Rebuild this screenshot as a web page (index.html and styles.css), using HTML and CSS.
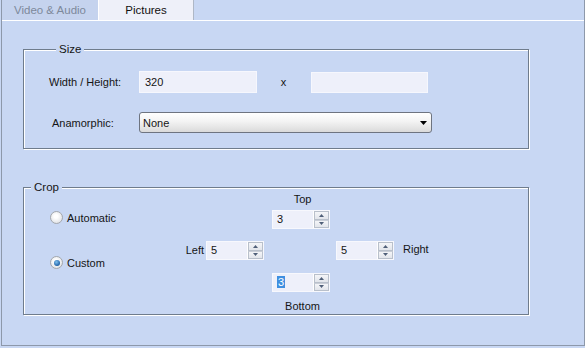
FILE: index.html
```html
<!DOCTYPE html>
<html>
<head>
<meta charset="utf-8">
<link rel="stylesheet" href="styles.css">
</head>
<body>
<div class="window">
  <div class="tabs">
    <div class="tab">Video &amp; Audio</div>
    <div class="tab active">Pictures</div>
  </div>
  <div class="panel">
    <fieldset class="group size">
      <legend>Size</legend>
      <div class="size-grid">
        <span class="lbl">Width / Height:</span>
        <div class="field">320</div>
        <span class="times">x</span>
        <div class="field"></div>
        <span class="lbl indent">Anamorphic:</span>
        <div class="combo">
          <span>None</span>
          <svg class="combo-arrow" width="7" height="4" viewBox="0 0 7 4"><path d="M0 0H7L3.5 4Z" fill="#000"/></svg>
        </div>
      </div>
    </fieldset>
    <fieldset class="group crop">
      <legend>Crop</legend>
      <div class="crop-body">
        <div class="radios">
          <div class="radio-row"><span class="radio"></span><span>Automatic</span></div>
          <div class="radio-row"><span class="radio checked"><span class="dot"></span></span><span>Custom</span></div>
        </div>
        <div class="cross">
          <span class="cap top-cap">Top</span>
          <div class="spin top-spin"><span class="spin-val">3</span><span class="spin-btns"><span class="up"><svg width="5" height="3" viewBox="0 0 5 3"><path d="M0 3L2.5 0L5 3Z" fill="#4f5f78"/></svg></span><span class="down"><svg width="5" height="3" viewBox="0 0 5 3"><path d="M0 0H5L2.5 3Z" fill="#4f5f78"/></svg></span></span></div>
          <span class="cap left-cap">Left</span>
          <div class="spin left-spin"><span class="spin-val">5</span><span class="spin-btns"><span class="up"><svg width="5" height="3" viewBox="0 0 5 3"><path d="M0 3L2.5 0L5 3Z" fill="#4f5f78"/></svg></span><span class="down"><svg width="5" height="3" viewBox="0 0 5 3"><path d="M0 0H5L2.5 3Z" fill="#4f5f78"/></svg></span></span></div>
          <div class="spin right-spin"><span class="spin-val">5</span><span class="spin-btns"><span class="up"><svg width="5" height="3" viewBox="0 0 5 3"><path d="M0 3L2.5 0L5 3Z" fill="#4f5f78"/></svg></span><span class="down"><svg width="5" height="3" viewBox="0 0 5 3"><path d="M0 0H5L2.5 3Z" fill="#4f5f78"/></svg></span></span></div>
          <span class="cap right-cap">Right</span>
          <div class="spin bottom-spin"><span class="spin-val"><span class="sel">3</span></span><span class="spin-btns"><span class="up"><svg width="5" height="3" viewBox="0 0 5 3"><path d="M0 3L2.5 0L5 3Z" fill="#4f5f78"/></svg></span><span class="down"><svg width="5" height="3" viewBox="0 0 5 3"><path d="M0 0H5L2.5 3Z" fill="#4f5f78"/></svg></span></span></div>
          <span class="cap bottom-cap">Bottom</span>
        </div>
      </div>
    </fieldset>
  </div>
</div>
</body>
</html>
```
FILE: styles.css
```css
* { box-sizing: border-box; }
html, body {
  margin: 0;
  padding: 0;
  background: #c8d7f3;
  font-family: "Liberation Sans", Arial, sans-serif;
  font-size: 11px;
  color: #151515;
}
.window {
  margin-left: 1px;
  width: 584px;
  height: 346px;
  border-left: 1px solid #8d98aa;
  border-right: 1px solid #8d98aa;
  border-bottom: 1px solid #8d98aa;
  display: flex;
  flex-direction: column;
}
.tabs {
  display: flex;
  height: 21px;
  border-bottom: 1px solid #ffffff;
}
.tab {
  width: 96px;
  height: 20px;
  line-height: 20px;
  text-align: center;
  color: #7d899b;
  background: #c5d3ee;
  font-size: 11.5px;
}
.tab.active {
  width: 96px;
  background: #eef0f9;
  color: #111;
  border-left: 1px solid #ffffff;
  border-right: 1px solid #aeb7c6;
}
.panel {
  flex: 1;
  padding: 0 0 0 21px;
}
.group {
  width: 506px;
  margin: 0;
  padding: 0;
  border: 1px solid #6f7c8c;
  box-shadow: inset 1px 1px 0 #ffffff, 1px 1px 0 #ffffff;
  min-width: 0;
}
.group legend {
  margin-left: 7px;
  padding: 0 3px;
  line-height: 13px;
  background: #c8d7f3;
  font-size: 11.5px;
}
.size {
  margin-top: 22px;
  padding: 14px 0 15px 25px;
}
.size-grid {
  display: grid;
  grid-template-columns: 90px 118px 54px 117px;
  grid-template-rows: 23px 21px;
  row-gap: 19px;
  align-items: center;
}
.lbl { white-space: nowrap; }
.indent { padding-left: 3px; }
.times { text-align: center; padding-right: 1px; }
.field {
  height: 22px;
  background: #eef0fa;
  border: 1px solid #f6f7fd;
  padding-left: 5px;
  line-height: 20px;
}
.size-grid .field:nth-of-type(2) { margin-top: 2px; height: 21px; }
.combo {
  grid-column: 2 / 5;
  width: 293px;
  height: 21px;
  border: 1px solid #6e7480;
  border-radius: 3px;
  background: linear-gradient(#ffffff, #f3f3f3 45%, #dadada);
  display: flex;
  align-items: center;
  justify-content: space-between;
  padding: 0 4px 0 3px;
}
.combo-arrow { margin-top: 1px; }
.crop {
  margin-top: 32px;
  padding: 0 0 1px 0;
}
.crop-body {
  display: flex;
}
.radios {
  width: 161px;
  padding: 17px 0 0 26px;
  display: flex;
  flex-direction: column;
  gap: 32px;
}
.radio-row {
  display: flex;
  align-items: center;
  gap: 4px;
  height: 13px;
}
.radio {
  width: 13px;
  height: 13px;
  border-radius: 50%;
  border: 1px solid #a3a7ad;
  background: radial-gradient(circle at 45% 40%, #ffffff 20%, #e4e6e9 70%, #cfd2d6);
  display: flex;
  align-items: center;
  justify-content: center;
}
.radio .dot {
  width: 6px;
  height: 6px;
  border-radius: 50%;
  background: radial-gradient(circle at 40% 35%, #7fc0ee, #1f62a8 70%, #12406f);
}
.cross {
  display: grid;
  grid-template-columns: 21px 58px 8px 58px 6px 58px auto;
  grid-template-rows: 16px 31px 32px 27px 13px;
  align-items: start;
}
.cap { line-height: 13px; white-space: nowrap; }
.top-cap { grid-column: 4; grid-row: 1; text-align: center; padding-left: 3px; margin-top: -1px; }
.top-spin { grid-column: 4; grid-row: 2; }
.left-cap { grid-column: 1; grid-row: 3; text-align: right; padding-right: 2px; margin-top: 3px; margin-left: -4px; }
.left-spin { grid-column: 2; grid-row: 3; }
.right-spin { grid-column: 6; grid-row: 3; }
.right-cap { grid-column: 7; grid-row: 3; padding-left: 9px; margin-top: 2px; }
.bottom-spin { grid-column: 4; grid-row: 4; }
.bottom-cap { grid-column: 4; grid-row: 5; text-align: center; padding-left: 3px; }
.spin {
  height: 19px;
  background: #eef0fa;
  border: 1px solid #f7f8fd;
  display: flex;
  justify-content: space-between;
}
.spin-val {
  padding-left: 4px;
  line-height: 17px;
}
.sel {
  background: #3f8fe0;
  color: #ffffff;
  padding: 0 1px;
}
.spin-btns {
  width: 16px;
  display: flex;
  flex-direction: column;
  border-left: 1px solid #ffffff;
}
.spin-btns span {
  flex: 1;
  display: flex;
  align-items: center;
  justify-content: center;
  border: 1px solid #b9c0cb;
  background: linear-gradient(#f4f5f8, #e2e5eb);
}
.spin-btns .down { border-top: 1px solid #c9ced7; }
```
